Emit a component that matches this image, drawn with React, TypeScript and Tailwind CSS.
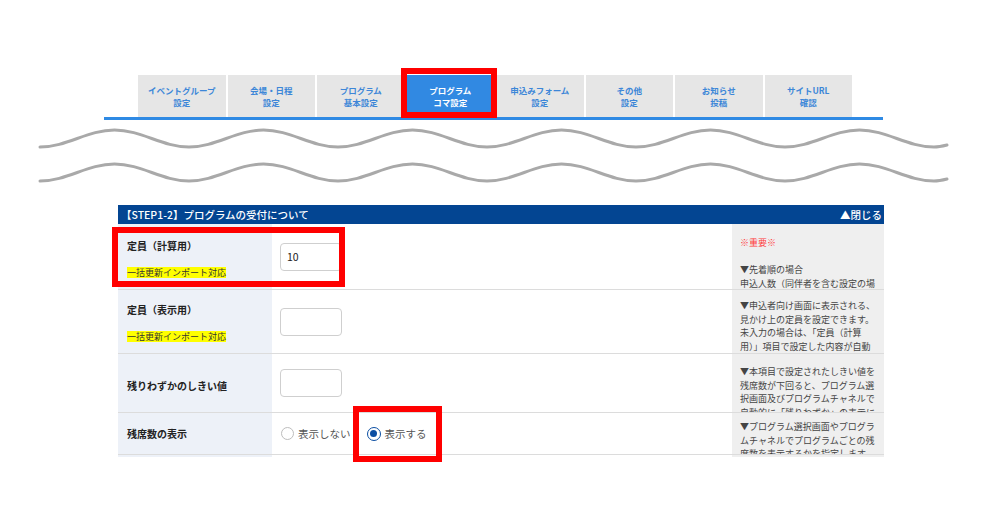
import React from 'react';

const tabs: [string, string][] = [
    ['イベントグループ', '設定'],
    ['会場・日程', '設定'],
    ['プログラム', '基本設定'],
    ['プログラム', 'コマ設定'],
    ['申込みフォーム', '設定'],
    ['その他', '設定'],
    ['お知らせ', '投稿'],
    ['サイトURL', '確認'],
];

// sine-like wave built from half periods, trough -> peak -> trough ...
const wave = (trough: number) => {
    const peak = trough - 17;
    const half = 74.5;
    let x = 40;
    let y = trough;
    let d = `M${x} ${y}`;
    for (let i = 0; i < 12; i++) {
        const nx = x + half;
        const ny = y === trough ? peak : trough;
        d += ` C${x + 27} ${y} ${nx - 27} ${ny} ${nx} ${ny}`;
        x = nx;
        y = ny;
    }
    d += ` C${x + 5} ${y} ${x + 9} ${y - 1} ${x + 13} ${y - 2}`;
    return d;
};

const Note = ({ lines, pt }: { lines: { t: string; red?: boolean }[]; pt: string }) => (
    <div className={`bg-[#efefef] overflow-hidden pl-[8px] text-[9px] leading-[13.6px] text-[#444] ${pt}`}>
        {lines.map((l, i) => (
            <div key={i} className={`whitespace-nowrap h-[13.6px] ${l.red ? 'text-[#ff3c3c]' : ''}`}>
                {l.t}
            </div>
        ))}
    </div>
);

const Label = ({ title, bulk, pt }: { title: string; bulk?: boolean; pt: string }) => (
    <div className={`bg-[#edf1f8] pl-[9px] flex flex-col items-start ${pt}`}>
        <span className="text-[10px] leading-[14px] font-bold text-[#222]">{title}</span>
        {bulk && (
            <span className="mt-[14px] bg-[#ffff00] text-[9px] leading-[11px] text-[#333]">一括更新インポート対応</span>
        )}
    </div>
);

const Box = ({ value }: { value?: string }) => (
    <input
        readOnly
        value={value ?? ''}
        className="w-[62px] h-[28px] border border-[#cfcfcf] rounded-[4px] px-[6px] text-[10.5px] text-[#222] bg-white outline-none"
    />
);

export default function App() {
    return (
        <div className="relative w-[988px] h-[506px] bg-white overflow-hidden font-['Noto_Sans_CJK_JP','Noto_Sans',sans-serif]">
            {/* tab nav */}
            <div className="ml-[104px] mt-[75px] w-[779px] border-b-[3px] border-[#2f8ae4]">
                <div className="flex gap-[2px] pl-[34px]">
                    {tabs.map(([a, b], i) => (
                        <div
                            key={i}
                            className={`w-[87.5px] h-[42px] flex flex-col items-center justify-center text-[8.5px] leading-[12.5px] font-bold ${
                                i === 3 ? 'bg-[#3189e2] text-white' : 'bg-[#e6e6e6] text-[#3c86d8]'
                            }`}
                        >
                            <span>{a}</span>
                            <span>{b}</span>
                        </div>
                    ))}
                </div>
            </div>

            {/* cut marks */}
            <svg width="988" height="80" viewBox="0 120 988 80" className="block">
                <path d={wave(147)} fill="none" stroke="#a9a9a9" strokeWidth="3" strokeLinecap="round" />
                <path d={wave(181)} fill="none" stroke="#a9a9a9" strokeWidth="3" strokeLinecap="round" />
            </svg>

            {/* form */}
            <div className="ml-[118px] mt-[5px] w-[766px] h-[252px] overflow-hidden">
                <div className="h-[19px] bg-[#034592] text-white text-[10.5px] font-medium flex items-center justify-between pl-[3px] pr-[2px]">
                    <span>【STEP1-2】プログラムの受付について</span>
                    <span>▲閉じる</span>
                </div>

                <div className="grid grid-cols-[154px_460px_152px] h-[66px] border-b border-[#dcdcdc]">
                    <Label title="定員（計算用）" bulk pt="pt-[15px]" />
                    <div className="flex items-center pl-[8px]">
                        <Box value="10" />
                    </div>
                    <Note
                        pt="pt-[12px]"
                        lines={[
                            { t: '※重要※', red: true },
                            { t: '' },
                            { t: '▼先着順の場合' },
                            { t: '申込人数（同伴者を含む設定の場' },
                            { t: '合は同伴者数を含む）が定員に' },
                        ]}
                    />
                </div>

                <div className="grid grid-cols-[154px_460px_152px] h-[64px] border-b border-[#dcdcdc]">
                    <Label title="定員（表示用）" bulk pt="pt-[13px]" />
                    <div className="flex items-center pl-[8px]">
                        <Box />
                    </div>
                    <Note
                        pt="pt-[9px]"
                        lines={[
                            { t: '▼申込者向け画面に表示される、' },
                            { t: '見かけ上の定員を設定できます。' },
                            { t: '未入力の場合は、「定員（計算' },
                            { t: '用）」項目で設定した内容が自動' },
                            { t: '的に表示されます。' },
                        ]}
                    />
                </div>

                <div className="grid grid-cols-[154px_460px_152px] h-[59px] border-b border-[#dcdcdc]">
                    <Label title="残りわずかのしきい値" pt="pt-[25px]" />
                    <div className="flex items-center pl-[8px]">
                        <Box />
                    </div>
                    <Note
                        pt="pt-[11px]"
                        lines={[
                            { t: '▼本項目で設定されたしきい値を' },
                            { t: '残席数が下回ると、プログラム選' },
                            { t: '択画面及びプログラムチャネルで' },
                            { t: '自動的に「残りわずか」の表示に' },
                            { t: '切り替わります。' },
                        ]}
                    />
                </div>

                <div className="grid grid-cols-[154px_460px_152px] h-[42px] border-b border-[#dcdcdc]">
                    <Label title="残席数の表示" pt="pt-[14px]" />
                    <div className="flex items-center pl-[9px] text-[10.5px] text-[#555]">
                        <span className="w-[13px] h-[13px] rounded-full border border-[#bdbdbd] bg-white" />
                        <span className="ml-[4px]">表示しない</span>
                        <span className="ml-[16px] w-[14px] h-[14px] rounded-full border-[1.5px] border-[#0b4ea2] bg-white flex items-center justify-center">
                            <span className="w-[7px] h-[7px] rounded-full bg-[#0b4ea2]" />
                        </span>
                        <span className="ml-[4px]">表示する</span>
                    </div>
                    <Note
                        pt="pt-[7px]"
                        lines={[
                            { t: '▼プログラム選択画面やプログラ' },
                            { t: 'ムチャネルでプログラムごとの残' },
                            { t: '席数を表示するかを指定します。' },
                        ]}
                    />
                </div>

                <div className="grid grid-cols-[154px_460px_152px] h-[40px]">
                    <div className="bg-[#edf1f8]" />
                    <div />
                    <div className="bg-[#efefef]" />
                </div>
            </div>

            {/* red annotation frames */}
            <div className="absolute left-[401px] top-[68px] w-[96px] h-[50px] border-[6px] border-[#ff0000]" />
            <div className="absolute left-[112px] top-[227px] w-[233px] h-[60px] border-[6px] border-[#ff0000]" />
            <div className="absolute left-[353px] top-[406px] w-[89px] h-[56px] border-[6px] border-[#ff0000]" />
        </div>
    );
}
